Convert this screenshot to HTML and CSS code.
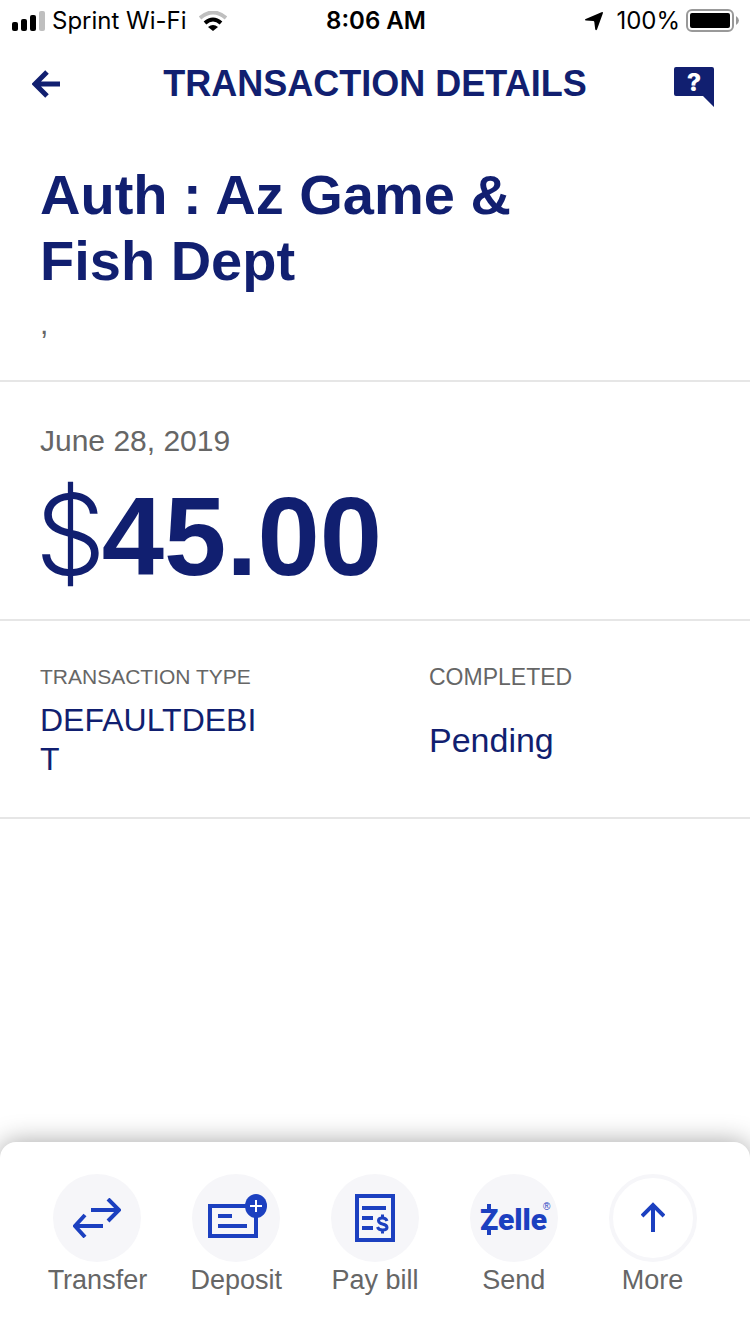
FILE: index.html
```html
<!DOCTYPE html>
<html lang="en">
<head>
    <meta charset="UTF-8">
    <meta name="viewport" content="width=device-width, initial-scale=1.0">
    <title>Transaction Details</title>
    <link rel="stylesheet" href="styles.css">
</head>
<body>
    <div class="status-bar">
        <div class="status-left">
            <svg width="34" height="20" viewBox="0 0 34 20">
                <rect x="0" y="11" width="6" height="9" rx="2"/>
                <rect x="9" y="8" width="6" height="12" rx="2"/>
                <rect x="18" y="4" width="6" height="16" rx="2"/>
                <rect x="27" y="0" width="6" height="20" rx="2" fill="#bfbfbf"/>
            </svg>
            <span class="carrier">Sprint Wi-Fi</span>
            <svg width="28" height="20" viewBox="0 0 28 20">
                <path d="M1 7Q14 -4 27 7" fill="none" stroke="#bfbfbf" stroke-width="4"/>
                <path d="M6 12Q14 5 22 12" fill="none" stroke="#000" stroke-width="4"/>
                <path d="M9 16Q14 12 19 16L14 20Z"/>
            </svg>
        </div>
        <span class="time">8:06 AM</span>
        <div class="status-right">
            <svg width="20" height="20" viewBox="0 0 20 20">
                <path d="M17.500 1.200Q19.500 0.500 18.800 2.500L13 18.500Q12 20 11.200 18.300L10.300 11Q10.200 10 9.200 10L2 9.600Q0 9 1.700 8Z"/>
            </svg>
            <span>100%</span>
            <svg width="54" height="24" viewBox="0 0 54 24">
                <rect x="1" y="1" width="46" height="21" rx="5" fill="none" stroke="#999" stroke-width="2"/>
                <rect x="4" y="4" width="40" height="15" rx="2"/>
                <path d="M50 7Q53 9 53 11.500Q53 14 50 16Z" fill="#999"/>
            </svg>
        </div>
    </div>

    <header class="header">
        <button class="icon-button" aria-label="Back">
            <svg width="28" height="28" viewBox="0 0 28 28" fill="none" stroke="#111f70" stroke-width="5">
                <path d="M28 14H4M15 2L3 14L15 26"/>
            </svg>
        </button>
        <h1>TRANSACTION DETAILS</h1>
        <button class="icon-button help" aria-label="Help">
            <svg width="40" height="40" viewBox="0 0 40 40">
                <path d="M2 0H38Q40 0 40 2V40L29 29H2Q0 29 0 27V2Q0 0 2 0Z" fill="#111f70"/>
                <text class="help-mark" x="20" y="24">?</text>
            </svg>
        </button>
    </header>

    <main>
        <section class="merchant">
            <h2>Auth : Az Game &amp; Fish Dept</h2>
            <p>,</p>
        </section>
        <section class="amount">
            <p class="date">June 28, 2019</p>
            <p class="total"><span class="currency">$</span>45.00</p>
        </section>
        <dl class="details">
            <div>
                <dt class="type-label">TRANSACTION TYPE</dt>
                <dd class="type-value">DEFAULTDEBIT</dd>
            </div>
            <div>
                <dt>COMPLETED</dt>
                <dd>Pending</dd>
            </div>
        </dl>
    </main>

    <nav class="actions">
        <button class="action">
            <span class="circle">
                <svg width="48" height="40" viewBox="0 0 48 40" fill="none" stroke="#1c40c0" stroke-width="4">
                    <path d="M18 12H45M35 1L46 12L35 23"/>
                    <path d="M30 28H3M12 17L2 28L12 39"/>
                </svg>
            </span>
            Transfer
        </button>
        <button class="action">
            <span class="circle">
                <svg width="64" height="48" viewBox="0 0 64 48">
                    <path d="M6 12H52V42H6Z" fill="none" stroke="#1c40c0" stroke-width="4"/>
                    <path d="M14 22H28M14 32H43" stroke="#1c40c0" stroke-width="4"/>
                    <ellipse cx="52" cy="12" rx="11" ry="12" fill="#1c40c0"/>
                    <path d="M46 12H58M52 6V18" stroke="#fff" stroke-width="2"/>
                </svg>
            </span>
            Deposit
        </button>
        <button class="action">
            <span class="circle">
                <svg width="40" height="48" viewBox="0 0 40 48">
                    <path d="M2 2H38V46H2Z" fill="none" stroke="#1c40c0" stroke-width="4"/>
                    <path d="M7 14H31M7 24H18M7 34H18" stroke="#1c40c0" stroke-width="4"/>
                    <path d="M32 27Q31 24 27.500 24Q23.500 24 23.500 26.500Q23.500 29 27.500 30Q32 31 32 33.500Q32 36 27.500 36Q23.500 36 22.500 33M27.500 20.500V24M27.500 36V39.500" fill="none" stroke="#1c40c0" stroke-width="3"/>
                </svg>
            </span>
            Pay bill
        </button>
        <button class="action">
            <span class="circle">
                <svg width="76" height="48" viewBox="0 0 76 48">
                    <text class="zelle" x="4" y="36">Zelle</text>
                    <path d="M13 10V16M13 35V41" stroke="#1c40c0" stroke-width="4"/>
                    <text class="registered" x="67" y="16">®</text>
                </svg>
            </span>
            Send
        </button>
        <button class="action">
            <span class="circle outline">
                <svg width="24" height="32" viewBox="0 0 24 32" fill="none" stroke="#1c40c0" stroke-width="4">
                    <path d="M12 30V3M1 14L12 3L23 14"/>
                </svg>
            </span>
            More
        </button>
    </nav>
</body>
</html>
```
FILE: styles.css
```css
* {
    box-sizing: border-box;
}
body {
    margin: 0;
    min-height: 100vh;
    display: flex;
    flex-direction: column;
    background-color: #fff;
    color: #111f70;
    font-family: "Liberation Sans", Arial, sans-serif;
}
h1, h2, p, dl, dd {
    margin: 0;
}
svg {
    display: block;
}
button {
    border: none;
    padding: 0;
    background: none;
    font-family: inherit;
    cursor: pointer;
}
.status-bar {
    display: grid;
    grid-template-columns: 1fr auto 1fr;
    align-items: center;
    height: 41px;
    padding: 0 10px 0 12px;
    color: #000;
    font-family: Inter, sans-serif;
    font-size: 24px;
}
.status-left, .status-right {
    display: flex;
    align-items: center;
    gap: 6px;
}
.status-right {
    justify-content: flex-end;
}
.carrier {
    margin-right: 6px;
}
.status-right span {
    margin-left: 6px;
}
.time {
    font-weight: 600;
}
.header {
    display: grid;
    grid-template-columns: 1fr auto 1fr;
    align-items: center;
    height: 85px;
    padding: 0 32px;
}
.header h1 {
    font-size: 36px;
    line-height: 40px;
}
.icon-button {
    width: 40px;
}
.help {
    justify-self: end;
    margin: 6px 4px 0 0;
}
.help-mark {
    fill: #fff;
    font-family: Inter, sans-serif;
    font-size: 25px;
    font-weight: 800;
    text-anchor: middle;
}
main {
    flex: 1;
}
.merchant {
    padding: 36px 40px 38px;
    border-bottom: 2px solid #e6e6e6;
}
.merchant h2 {
    max-width: 520px;
    font-size: 56px;
    line-height: 66px;
}
.merchant p {
    margin-top: 12px;
    color: #666;
    font-size: 30px;
    line-height: 36px;
}
.amount {
    padding: 41px 40px 22px;
    border-bottom: 2px solid #e6e6e6;
}
.date {
    color: #666;
    font-size: 30px;
    line-height: 36px;
}
.total {
    margin-top: 18px;
    font-size: 112px;
    font-weight: bold;
    line-height: 120px;
}
.currency {
    margin: 0 -4px 0 -5px;
    font-family: Inter, sans-serif;
    font-weight: 300;
    line-height: 1;
}
.details {
    display: grid;
    grid-template-columns: 1fr 1fr;
    padding: 40px 0 38px 40px;
    gap: 68px;
    border-bottom: 2px solid #e6e6e6;
}
.details dt {
    color: #666;
    font-size: 23px;
    line-height: 32px;
}
.details dd {
    margin-top: 28px;
    font-size: 34px;
    line-height: 39px;
}
.details .type-label {
    font-size: 21px;
}
.details .type-value {
    max-width: 225px;
    margin-top: 8px;
    font-size: 32px;
    word-break: break-all;
}
.actions {
    display: grid;
    grid-template-columns: repeat(5, 1fr);
    height: 192px;
    padding: 32px 28px 0;
    border-radius: 16px 16px 0 0;
    background-color: #fff;
    box-shadow: 0 0 26px rgba(0, 0, 0, 0.36);
}
.action {
    display: flex;
    flex-direction: column;
    align-items: center;
    gap: 2px;
    color: #666;
    font-size: 27px;
    line-height: 32px;
}
.circle {
    display: flex;
    align-items: center;
    justify-content: center;
    width: 88px;
    height: 88px;
    border-radius: 50%;
    background-color: #f6f6f9;
}
.outline {
    border: 4px solid #f6f6f9;
    background-color: #fff;
}
.zelle {
    fill: #1c40c0;
    font-family: Roboto, sans-serif;
    font-size: 30px;
    font-weight: 900;
}
.registered {
    fill: #1c40c0;
    font-size: 10px;
}
```
